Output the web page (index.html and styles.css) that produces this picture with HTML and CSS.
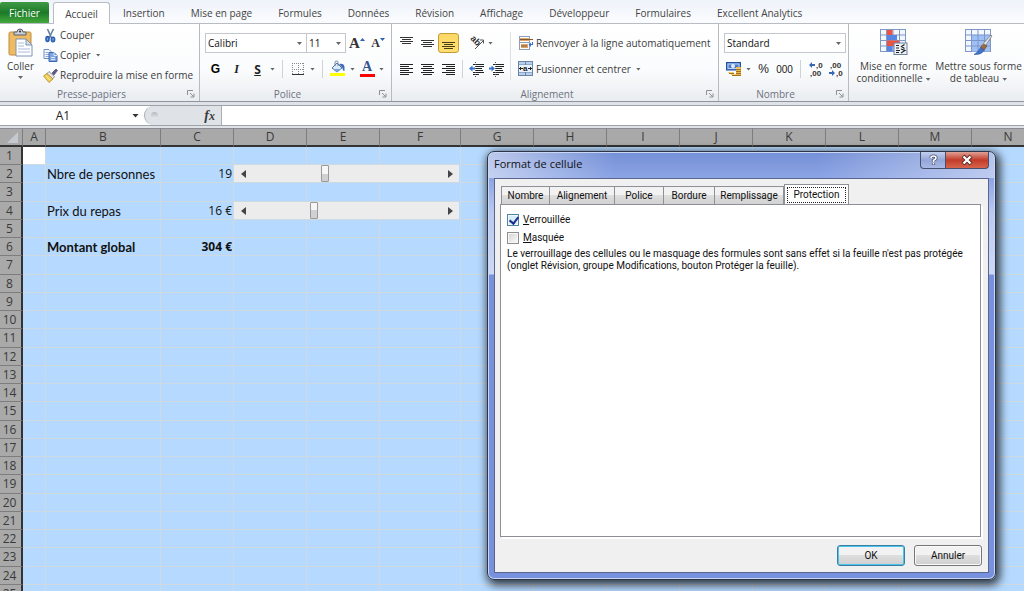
FILE: index.html
```html
<!DOCTYPE html>
<html lang="fr">
<head>
<meta charset="utf-8">
<title>Format de cellule</title>
<link rel="stylesheet" href="styles.css">
</head>
<body>
<div class="app">
  <nav class="tabs">
    <button class="tab file">Fichier</button>
    <button class="tab active">Accueil</button>
    <button class="tab">Insertion</button>
    <button class="tab">Mise en page</button>
    <button class="tab">Formules</button>
    <button class="tab">Données</button>
    <button class="tab">Révision</button>
    <button class="tab">Affichage</button>
    <button class="tab">Développeur</button>
    <button class="tab">Formulaires</button>
    <button class="tab">Excellent Analytics</button>
  </nav>

  <div class="ribbon">
    <section class="group clipboard">
      <div class="tools clip">
        <button class="paste">
          <svg width="26" height="28" viewBox="0 0 26 28"><rect x="1" y="3" width="22" height="23" rx="1.5" fill="#eebb62" stroke="#c08a3c"/><path d="M6 6h12V3h-3a3 3 0 0 0-6 0H6z" fill="#c9ced6" stroke="#59606c"/><circle cx="12" cy="2.500" r="1" fill="#333"/><path d="M8 10h10l6 6v11H8z" fill="#fff" stroke="#7d93b5"/><path d="M18 10v6h6z" fill="#d3deee" stroke="#7d93b5"/><path d="M10 14h6M10 17h6M10 20h12M10 23h12" stroke="#a9bbd6"/></svg>
          <span>Coller</span><i class="caret"></i>
        </button>
        <div class="cliplist">
          <button class="cmd"><svg width="15" height="15" viewBox="0 0 15 15"><path d="M4.500 1l4 9M10.500 1L6 10" stroke="#6a7f9e" stroke-width="1.600" fill="none"/><ellipse cx="4.500" cy="11" rx="1.500" ry="2.400" fill="#7ea3de" stroke="#2b5db5" stroke-width="1.600"/><ellipse cx="10" cy="11.500" rx="1.600" ry="2.200" fill="#7ea3de" stroke="#2b5db5" stroke-width="1.600"/></svg>Couper</button>
          <button class="cmd"><svg width="15" height="15" viewBox="0 0 15 15"><path d="M1 1.500h5l3 3v6H1z" fill="#f5f9ff" stroke="#6f8fc4"/><path d="M2.500 4.500h3M2.500 6.500h4M2.500 8.500h4" stroke="#8fabd8"/><path d="M6 4.500h5l3 3v6H6z" fill="#7fa5e0" stroke="#3f67ad"/><path d="M11 4.500v3h3M8 9.500h4M8 11.500h4" stroke="#dce8fa" fill="none"/></svg>Copier<i class="caret"></i></button>
          <button class="cmd"><svg width="15" height="15" viewBox="0 0 15 15"><path d="M9 5l4-4 1.500 1.500L11 7z" fill="#5f5a8c" stroke="#3f3a60" stroke-width=".6"/><path d="M6 3.500l5.500 5-2 2.500-6-5z" fill="#e6e8ee" stroke="#66686e" stroke-width=".7"/><path d="M4 5.500l6 5.500-4 3.500L.500 8z" fill="#f1cf55" stroke="#a98219" stroke-width=".7"/><path d="M3 8l4 4" stroke="#fff0a8"/></svg>Reproduire la mise en forme</button>
        </div>
      </div>
      <footer class="caption"><span>Presse-papiers</span><button class="launch" aria-label="Options"><svg width="8" height="8" viewBox="0 0 8 8"><path d="M.5 5V.5H6M3 3l3.500 3.500M7 3.500V7H3.500" fill="none" stroke="#8a8f98"/></svg></button></footer>
    </section>

    <section class="group font">
      <div class="tools rows">
        <div class="row">
          <span class="combo name"><select aria-label="Police"><option>Calibri</option></select><i class="caret"></i></span>
          <span class="combo size"><select aria-label="Taille"><option>11</option></select><i class="caret"></i></span>
          <button class="ic grow" aria-label="Agrandir"><b class="serif big">A</b><svg width="5" height="12" viewBox="0 0 5 12"><path d="M0 4l2.500-3L5 4z" fill="#2f5fb8"/></svg></button>
          <button class="ic grow" aria-label="Réduire"><b class="serif small">A</b><svg width="5" height="12" viewBox="0 0 5 12"><path d="M0 1h5L2.500 4z" fill="#2f5fb8"/></svg></button>
        </div>
        <div class="row">
          <button class="ic fmt"><b>G</b></button>
          <button class="ic fmt"><em>I</em></button>
          <button class="ic fmt"><u>S</u></button>
          <i class="caret pad"></i><i class="sep"></i>
          <button class="ic" aria-label="Bordures"><svg width="14" height="14" viewBox="0 0 14 14"><path d="M1 1.500h12M1 7.500h12M1.500 1v11M7.500 1v11M12.500 1v11" stroke="#888" stroke-dasharray="1 1"/><path d="M1 12.500h12" stroke="#333"/></svg></button>
          <i class="caret pad"></i><i class="sep"></i>
          <button class="ic" aria-label="Remplissage"><svg width="16" height="16" viewBox="0 0 16 16"><path d="M2 7l5-5 5 5-5 4z" fill="#dbe8f8" stroke="#56749f"/><path d="M5 5V1.500a1.500 1.500 0 0 1 3 0V5" fill="none" stroke="#6a82a6"/><path d="M9 3q5-1 5.500 3v4q-2 0-2-3z" fill="#3e6cb8"/><path d="M3 8h8l-4 3z" fill="#78a4de"/><rect x="0" y="12" width="15" height="3" fill="#ff0"/></svg></button>
          <i class="caret pad"></i>
          <button class="ic acolor" aria-label="Couleur de police"><b class="serif">A</b></button>
          <i class="caret pad"></i>
        </div>
      </div>
      <footer class="caption"><span>Police</span><button class="launch" aria-label="Options"><svg width="8" height="8" viewBox="0 0 8 8"><path d="M.5 5V.5H6M3 3l3.500 3.500M7 3.500V7H3.500" fill="none" stroke="#8a8f98"/></svg></button></footer>
    </section>

    <section class="group align">
      <div class="tools aligns">
        <div class="rows">
          <div class="row">
            <button class="ic fmt" aria-label="Haut"><svg width="14" height="14" viewBox="0 0 14 14"><path d="M0 1.500h13M2 3.500h9M0 5.500h13M2 7.500h9" stroke="#333"/></svg></button>
            <button class="ic fmt" aria-label="Centre"><svg width="14" height="14" viewBox="0 0 14 14"><path d="M0 4.500h13M2 6.500h9M0 8.500h13M2 10.500h9" stroke="#333"/></svg></button>
            <button class="ic fmt on" aria-label="Bas"><svg width="14" height="14" viewBox="0 0 14 14"><path d="M0 6.500h13M2 8.500h9M0 10.500h13M2 12.500h9" stroke="#4a3f14"/></svg></button>
            <i class="sep faint"></i>
            <button class="ic" aria-label="Orientation"><svg width="16" height="16" viewBox="0 0 16 16"><text x="0" y="8" class="ab" transform="rotate(45 5 6)">ab</text><path d="M5 14l8-8M10 5h3.500v3.500" fill="none" stroke="#555"/></svg></button>
            <i class="caret"></i>
          </div>
          <div class="row">
            <button class="ic fmt" aria-label="Gauche"><svg width="14" height="14" viewBox="0 0 14 14"><path d="M0 2.500h13M0 4.500h9M0 6.500h13M0 8.500h9M0 10.500h13M0 12.500h9" stroke="#222"/></svg></button>
            <button class="ic fmt" aria-label="Centrer"><svg width="14" height="14" viewBox="0 0 14 14"><path d="M0 2.500h13M2 4.500h9M0 6.500h13M2 8.500h9M0 10.500h13M2 12.500h9" stroke="#222"/></svg></button>
            <button class="ic fmt" aria-label="Droite"><svg width="14" height="14" viewBox="0 0 14 14"><path d="M0 2.500h13M4 4.500h9M0 6.500h13M4 8.500h9M0 10.500h13M4 12.500h9" stroke="#222"/></svg></button>
            <i class="sep narrow"></i>
            <button class="ic" aria-label="Diminuer le retrait"><svg width="15" height="15" viewBox="0 0 15 15"><path d="M4 2.500h11M7 4.500h8M7 6.500h6M7 8.500h7M4 10.500h11M4 12.500h6" stroke="#222"/><path d="M6.500 0v15" stroke="#555" stroke-dasharray="1 1"/><path d="M0 6.500l3.500-3v2H6v2H3.500v2z" fill="#3a72d0"/></svg></button>
            <button class="ic" aria-label="Augmenter le retrait"><svg width="15" height="15" viewBox="0 0 15 15"><path d="M4 2.500h11M7 4.500h8M7 6.500h6M7 8.500h7M4 10.500h11M4 12.500h6" stroke="#222"/><path d="M6.500 0v15" stroke="#555" stroke-dasharray="1 1"/><path d="M6 6.500l-3.500-3v2H0v2h2.500v2z" fill="#3a72d0"/></svg></button>
          </div>
        </div>
        <i class="sep tall"></i>
        <div class="rows">
          <button class="cmd row"><svg width="16" height="16" viewBox="0 0 16 16"><path d="M1.500 1v14M11.500 1v14M1 1.500h11M1 7.500h11M1 14.500h11" stroke="#8a9fc0" fill="none"/><rect x="2" y="3" width="10" height="3" fill="#e0a465"/><rect x="3" y="9" width="7" height="4" fill="#e0a465"/><path d="M2 4.500h13M3 11h6" stroke="#7b5a38"/><path d="M14 7h1v3h-2v2l-2.500-2.500L13 7.500V9h1z" fill="#3a72c8"/></svg>Renvoyer à la ligne automatiquement</button>
          <button class="cmd row"><svg width="16" height="16" viewBox="0 0 16 16"><rect x=".5" y=".5" width="14" height="14" fill="#b8cfee" stroke="#6b83a8"/><path d="M7.500 0v15M0 4h15M0 11h15" stroke="#6b83a8"/><rect x="1" y="4" width="13" height="7" fill="#e9f1fc"/><path d="M1 7.500h4M10 7.500h4M3 6l-1.500 1.500L3 9M12 6l1.500 1.500L12 9" stroke="#222" fill="none"/><text x="5" y="10" class="mid">a</text></svg>Fusionner et centrer<i class="caret"></i></button>
        </div>
      </div>
      <footer class="caption"><span>Alignement</span><button class="launch" aria-label="Options"><svg width="8" height="8" viewBox="0 0 8 8"><path d="M.5 5V.5H6M3 3l3.500 3.500M7 3.500V7H3.500" fill="none" stroke="#8a8f98"/></svg></button></footer>
    </section>

    <section class="group number">
      <div class="tools rows">
        <div class="row">
          <span class="combo wide"><select aria-label="Format de nombre"><option>Standard</option></select><i class="caret"></i></span>
        </div>
        <div class="row">
          <button class="ic" aria-label="Format monétaire"><svg width="16" height="16" viewBox="0 0 16 16"><rect x=".5" y="1.500" width="14" height="7.500" fill="#4b7bc9" stroke="#244f9b"/><rect x="2" y="3" width="11" height="4.500" fill="none" stroke="#bcd3f5"/><circle cx="7" cy="5" r="2" fill="#e2ecfb"/><path d="M10 6h5v9h-5z" fill="#e9b548"/><path d="M10 8.500h5M10 10.500h5M10 12.500h5M10 14.500h5M3 12.500h5M6 14.500h4" stroke="#a2711c"/><path d="M2 11.500h6M5 13.500h5M10 7.500h4" stroke="#f3cf70"/></svg></button>
          <i class="caret pad"></i>
          <button class="ic fmt txt">%</button>
          <button class="ic fmt txt">000</button>
          <i class="sep"></i>
          <button class="ic" aria-label="Ajouter une décimale"><svg width="16" height="16" viewBox="0 0 16 16"><text x="8" y="7" class="dec">,0</text><text x="2" y="15" class="dec">,00</text><path d="M1 4l3-3v2h3v2H4v2z" fill="#3a66b8"/></svg></button>
          <button class="ic" aria-label="Réduire les décimales"><svg width="16" height="16" viewBox="0 0 16 16"><text x="2" y="7" class="dec">,00</text><text x="8" y="15" class="dec">,0</text><path d="M7 12L4 9v2H1v2h3v2z" fill="#3a66b8"/></svg></button>
        </div>
      </div>
      <footer class="caption"><span>Nombre</span><button class="launch" aria-label="Options"><svg width="8" height="8" viewBox="0 0 8 8"><path d="M.5 5V.5H6M3 3l3.500 3.500M7 3.500V7H3.500" fill="none" stroke="#8a8f98"/></svg></button></footer>
    </section>

    <section class="group style">
      <div class="tools bigs">
        <button class="large">
          <svg width="28" height="27" viewBox="0 0 28 27"><rect x=".5" y=".5" width="25" height="22" fill="#f2f6fd" stroke="#8298c4"/><path d="M6.500 0v23M13 0v23M19.500 0v23M0 6h26M0 11.500h26M0 17h26" stroke="#8298c4"/><rect x="7" y="1" width="5.500" height="5" fill="#ef5340"/><rect x="7" y="6" width="10" height="5" fill="#5586e4"/><rect x="7" y="11.500" width="12" height="5.500" fill="#ef5340"/><rect x="7" y="17" width="5.500" height="5.500" fill="#5586e4"/><rect x="14" y="14" width="13" height="11.500" fill="#eef3fa" stroke="#6d7f9f"/><path d="M16 16.500h3M16 19h3M16 21.500h4M16 23.500h3M24.500 15.500l-3 2 3 2M21 20l4 1.500-4 2.500" stroke="#222" stroke-width="1.200" fill="none"/></svg>
          <span>Mise en forme<br>conditionnelle<i class="caret"></i></span>
        </button>
        <button class="large">
          <svg width="28" height="27" viewBox="0 0 28 27"><rect x=".5" y=".5" width="25" height="22" fill="#f2f6fd" stroke="#8298c4"/><rect x="7" y="6" width="18" height="16.500" fill="#9fc0f5"/><path d="M6.500 0v23M13 0v23M19.500 0v23M0 6h26M0 11.500h26M0 17h26" stroke="#7b95cc"/><path d="M27 7l-8 12-3-2L26 6z" fill="#e4e6ea" stroke="#777" stroke-width=".8"/><path d="M19 15l3 2-3 4-3.500-2.500z" fill="#9a6b3c" stroke="#6b4724" stroke-width=".6"/><path d="M15.500 18.500l3.500 2.500q-2 5-10 4.500 4-2 6.500-7z" fill="#3f72c8" stroke="#2a55a0" stroke-width=".6"/></svg>
          <span>Mettre sous forme<br>de tableau<i class="caret"></i></span>
        </button>
      </div>
    </section>
  </div>

  <div class="formula">
    <input class="namebox" value="A1" aria-label="Zone Nom">
    <i class="caret dark"></i>
    <div class="fxbar"><i class="knob"></i><button class="fx">f<span>x</span></button></div>
    <input class="finput" aria-label="Barre de formule">
  </div>

  <main class="sheet">
    <table>
      <colgroup><col class="c-a"><col class="c-a"><col class="c-b"><col class="c-n"><col class="c-n"><col class="c-n"><col class="c-f"><col class="c-n"><col class="c-n"><col class="c-n"><col class="c-n"><col class="c-n"><col class="c-n"><col class="c-n"><col class="c-n"></colgroup>
      <thead><tr><th class="corner"><svg width="20" height="16" viewBox="0 0 20 16"><path d="M18 3v11H7z" fill="#c3c9cf"/></svg></th><th>A</th><th>B</th><th>C</th><th>D</th><th>E</th><th>F</th><th>G</th><th>H</th><th>I</th><th>J</th><th>K</th><th>L</th><th>M</th><th>N</th></tr></thead>
      <tbody id="cells"></tbody>
    </table>
  </main>

  <div class="dialog" role="dialog" aria-label="Format de cellule">
    <header class="title"><span>Format de cellule</span>
      <div class="winbtns"><button class="help" aria-label="Aide"><svg width="11" height="12" viewBox="0 0 11 12"><path d="M3 4q0-2 2.500-2T8 4q0 1.200-2.500 2.500V8M5.500 9v2" fill="none" stroke="#4b5570" stroke-width="3.200"/><path d="M3 4q0-2 2.500-2T8 4q0 1.200-2.500 2.500V8M5.500 9v1.600" fill="none" stroke="#fff" stroke-width="1.600"/></svg></button><button class="close" aria-label="Fermer"><svg width="12" height="10" viewBox="0 0 12 10"><path d="M2 1l8 8M10 1L2 9" stroke="#5a2a2a" stroke-width="4"/><path d="M2.500 1.500l7 7M9.500 1.500l-7 7" stroke="#fff" stroke-width="2.300"/></svg></button></div>
    </header>
    <div class="client">
      <div class="dtabs" role="tablist">
        <button class="w48">Nombre</button><button class="w66">Alignement</button><button class="w48">Police</button><button class="w51">Bordure</button><button class="w69">Remplissage</button><button class="sel"><span>Protection</span></button>
      </div>
      <div class="panel">
        <label class="check"><input type="checkbox" checked><span><u>V</u>errouillée</span></label>
        <label class="check"><input type="checkbox"><span><u>M</u>asquée</span></label>
        <p>Le verrouillage des cellules ou le masquage des formules sont sans effet si la feuille n'est pas protégée<br>(onglet Révision, groupe Modifications, bouton Protéger la feuille).</p>
      </div>
      <div class="actions"><button class="ok">OK</button><button>Annuler</button></div>
    </div>
  </div>
</div>
<script src="sheet.js"></script>
</body>
</html>
```

FILE: sheet.js
```js
const rows = {
  2: { label: 'Nbre de personnes', text: '19', value: 19 },
  4: { label: 'Prix du repas', text: '16 €', value: 16 },
  6: { label: 'Montant global', text: '304 €', bold: true }
};

const scroller = (row) => `<td colspan="3" class="scroll"><div class="sbar">
  <button aria-label="Moins"><svg width="5" height="8" viewBox="0 0 5 8"><path d="M5 0v8L0 4z" fill="#444"/></svg></button>
  <input type="range" min="0" max="50" value="${row.value}" aria-label="${row.label}">
  <button aria-label="Plus"><svg width="5" height="8" viewBox="0 0 5 8"><path d="M0 0v8l5-4z" fill="#444"/></svg></button>
</div></td>`;

let html = '';
for (let r = 1; r <= 25; r++) {
  const row = rows[r] || {};
  const slider = row.value !== undefined;
  html += `<tr${row.bold ? ' class="bold"' : ''}><th>${r}</th>`;
  html += `<td${r === 1 ? ' class="current"' : ''}></td>`;
  html += `<td class="label">${row.label || ''}</td><td class="num">${row.text || ''}</td>`;
  html += slider ? scroller(row) : '<td></td><td></td><td></td>';
  html += '<td></td>'.repeat(8) + '</tr>';
}
document.getElementById('cells').innerHTML = html;
```

FILE: styles.css
```css
* { box-sizing: border-box; }
body { margin: 0; font-family: "Open Sans", "Noto Sans", sans-serif; font-size: 10px; color: #3c3c3c; }
button, input, select { font: inherit; color: inherit; margin: 0; padding: 0; border: 0; background: none; }
button { white-space: nowrap; }
svg { display: block; flex: none; overflow: visible; }
.app { position: relative; height: 100vh; overflow: hidden; display: flex; flex-direction: column; background: #dfe3e8; }

.tabs { display: flex; align-items: flex-end; height: 24px; flex: none; background: linear-gradient(#eef3fa, #fbfcfe); border-bottom: 1px solid #b9bdc3; }
.tab { height: 21px; padding: 0 13px; line-height: 20px; color: #444; }
.tab.file { width: 49px; padding: 0; margin-right: 4px; color: #fff; background: linear-gradient(#3f9a45, #1c7a28 50%, #43a83d); border-radius: 2px 2px 0 0; }
.tab.active { width: 57px; padding: 0; background: #fff; border: 1px solid #b9bdc3; border-bottom: 0; border-radius: 3px 3px 0 0; height: 22px; margin-bottom: -1px; }

.ribbon { display: flex; height: 78px; flex: none; background: linear-gradient(#fff, #fbfcfd 60%, #e9ecf0); border-bottom: 1px solid #8f959e; }
.group { display: flex; flex-direction: column; flex: none; border-right: 1px solid #b6bac1; }
.clipboard { width: 200px; }
.font { width: 192px; }
.align { width: 327px; }
.number { width: 130px; }
.style { flex: 1; border-right: 0; }
.tools { flex: 1; padding: 6px 0 0 5px; }
.caption { display: flex; align-items: center; height: 15px; color: #6d7282; }
.caption span { flex: 1; text-align: center; }
.launch { width: 16px; display: flex; justify-content: center; }
.rows { display: flex; flex-direction: column; }
.row { display: flex; align-items: center; height: 26px; }
.clip { display: flex; padding: 1px 0 0; }
.paste { width: 41px; display: flex; flex-direction: column; align-items: center; padding-top: 4px; }
.paste span { line-height: 18px; }
.paste .caret { margin-top: 1px; }
.cliplist { display: flex; flex-direction: column; padding-left: 2px; }
.cliplist .cmd { height: 20px; }
.cmd { display: flex; align-items: center; gap: 2px; }
.caret { display: inline-block; flex: none; width: 5px; height: 3px; background: #666; clip-path: polygon(0 0, 100% 0, 50% 100%); }
.cmd .caret, .large .caret { margin-left: 3px; }
.caret.pad { margin: 0 2px; }
.sep { flex: none; width: 1px; height: 18px; margin: 0 5px; background: #cfd2d6; }
.sep.faint { background: transparent; margin: 0 4px; }
.sep.narrow { margin: 0 3px; }
.sep.tall { height: 48px; margin: 2px 7px 0 4px; background: #dcdfe3; }
.combo { position: relative; height: 20px; border: 1px solid #c4c8ce; background: #fff; }
.combo select { width: 100%; height: 100%; appearance: none; padding-left: 2px; color: #111; }
.combo .caret { position: absolute; right: 4px; top: 8px; }
.combo.name { width: 102px; }
.combo.size { width: 40px; margin-left: -1px; }
.combo.wide { width: 122px; }
.ic { display: flex; align-items: center; justify-content: center; width: 20px; height: 20px; flex: none; }
.fmt { width: 21px; color: #222; font-size: 12px; }
.fmt b { font-family: "Liberation Sans", sans-serif; font-weight: 700; color: #000; }
.fmt em { font-family: "Liberation Serif", serif; font-weight: 700; }
.fmt u { font-weight: 700; }
.fmt.txt { font-family: "Liberation Sans", sans-serif; font-size: 10px; }
.fmt.txt:nth-child(3) { font-size: 12px; }
.grow { width: 20px; margin-left: 1px; }
.serif { font-family: "Liberation Serif", serif; font-size: 14px; line-height: 12px; color: #333; }
.serif.big { font-size: 15px; }
.serif.small { font-size: 12px; }
.acolor { align-items: flex-start; }
.acolor .serif { width: 15px; height: 18px; line-height: 16px; border-bottom: 3px solid #f00; color: #35548f; text-align: center; }
.on { border: 1px solid #c79a35; border-radius: 3px; background: linear-gradient(#fbd766, #ffdf70); }
.ab { font: 700 9px "Liberation Sans", sans-serif; fill: #333; }
.mid { font: 700 8px "Liberation Sans", sans-serif; fill: #222; }
.dec { font: 700 8px "Liberation Sans", sans-serif; fill: #333; }
.aligns { display: flex; padding-left: 4px; }
.bigs { display: flex; padding: 5px 0 0 2px; }
.large { display: flex; flex-direction: column; align-items: center; gap: 4px; width: 85px; line-height: 12px; }
.large .caret { vertical-align: middle; }

.formula { display: flex; align-items: center; height: 21px; margin: 3px 0 2px; flex: none; background: #fff; border-top: 1px solid #9da3ab; border-bottom: 1px solid #9da3ab; }
.namebox { width: 126px; text-align: center; font-size: 12px; color: #222; }
.caret.dark { width: 7px; height: 4px; margin: 0 5px 0 6px; background: #333; }
.fxbar { display: flex; align-items: center; justify-content: space-between; width: 78px; height: 100%; padding: 0 6px; background: #dfe3e8; border: 1px solid #a9aeb5; border-width: 0 1px; border-radius: 10px 0 0 10px; }
.knob { width: 7px; height: 7px; border-radius: 50%; background: linear-gradient(#b5b9bf, #e9ecef); }
.fx { font: italic 700 14px "Liberation Serif", serif; line-height: 14px; }
.fx span { font-size: 12px; }
.finput { flex: 1; height: 100%; background: #fff; }

.sheet { flex: 1; min-height: 0; overflow: hidden; background: #b6daff; }
table { table-layout: fixed; width: 0; border-collapse: separate; border-spacing: 0; font-size: 12px; color: #111; }
.c-a { width: 23px; } .c-b { width: 115px; } .c-n { width: 73px; } .c-f { width: 81px; }
tr { height: 18px; }
tbody tr:nth-child(4n+3) { height: 19px; }
td, th { padding: 0; line-height: 14px; white-space: nowrap; }
th { background: #a9a9a9; border-right: 1px solid #7d7d7d; font-weight: 400; color: #3a3a3a; }
thead tr { height: 19px; }
thead th { border-top: 1px solid #8a8e94; border-bottom: 2px solid #333; }
tbody th { border-bottom: 1px solid #7d7d7d; border-right: 2px solid #333; padding-right: 2px; }
td { border-right: 1px solid #cfd9e2; border-bottom: 1px solid #cfd9e2; background: #b6daff; }
.current { background: #fff; }
.label { padding-left: 1px; font-family: Lato, sans-serif; font-size: 13px; }
.num { text-align: right; padding-right: 1px; }
.bold { font-weight: 700; }
.scroll { vertical-align: top; padding-right: 1px; }
.sbar { display: flex; height: 17px; background: #ececec; }
.sbar button { width: 18px; display: flex; align-items: center; justify-content: center; }
.sbar input { appearance: none; flex: 1; min-width: 0; height: 17px; }
.sbar input::-webkit-slider-thumb { appearance: none; width: 8px; height: 17px; border: 1px solid #999; border-radius: 1px; background: linear-gradient(#f6f6f6 50%, #d0d0d4 50%); }

.dialog { position: absolute; left: 487px; top: 151px; width: 509px; height: 429px; display: flex; flex-direction: column; padding: 0 6px 6px; border: 1px solid #2d3648; border-radius: 7px; background: linear-gradient(90deg, rgba(255,255,255,.5), rgba(255,255,255,0) 25%, rgba(255,255,255,0) 65%, rgba(255,255,255,.45)) top / 100% 26px no-repeat, linear-gradient(#7590d6, #8ba4e4 26px, #b9c9f0 60px, #cdd9f5 122px, #7891de 123px); box-shadow: inset 0 0 0 1px #c9d6f4, 2px 3px 10px 2px rgba(0,0,0,.75); font-family: Roboto, sans-serif; color: #111; }
.title { display: flex; justify-content: space-between; height: 26px; flex: none; }
.title > span { font-family: "Open Sans", sans-serif; font-size: 11px; line-height: 24px; }
.winbtns { display: flex; height: 17px; }
.winbtns button { display: flex; align-items: center; justify-content: center; border: 1px solid #46506e; border-top: 0; }
.help { width: 26px; border-radius: 0 0 0 4px; background: linear-gradient(#c5d0ee, #93a5d8 50%, #a9b9e6); }
.close { width: 44px; margin-left: -1px; border-radius: 0 0 4px 0; background: linear-gradient(#e0a196, #c23c28 50%, #d8644c); }
.client { flex: 1; display: flex; flex-direction: column; padding: 5px 7px 6px 5px; border: 1px solid #59658c; background: #f0f0f0; }
.dtabs { display: flex; align-items: flex-end; padding-left: 1px; height: 20px; }
.dtabs button { height: 18px; flex: none; border: 1px solid #8d9096; border-width: 1px 1px 0 0; background: linear-gradient(#f2f2f2 50%, #dedede 50%, #d2d2d2); }
.dtabs button:first-child { border-left-width: 1px; }
.w48 { width: 49px; } .w51 { width: 51px; } .w66 { width: 65px; } .w69 { width: 69px; }
.dtabs .sel { width: 65px; height: 21px; padding: 2px; margin-bottom: -1px; border-left-width: 1px; background: #fff; }
.sel span { display: block; line-height: 14px; border: 1px dotted #222; }
.panel { flex: 1; padding: 6px; border: 1px solid #8d9096; background: #fff; box-shadow: 2px 2px 0 #fff; }
.check { display: flex; align-items: center; gap: 4px; height: 18px; line-height: 14px; }
.check input { appearance: none; width: 12px; height: 12px; border: 1px solid #8e8f8f; background: linear-gradient(135deg, #d5d5d5, #fafafa); box-shadow: inset 0 0 0 1px #f6f6f6; }
.check input:checked { border-color: #4a86ad; background: #d6ecf8; }
.check input:checked::before { content: ""; display: block; width: 4px; height: 7px; margin: 0 3px; border: solid #1a2f8c; border-width: 0 2px 2px 0; transform: rotate(38deg); }
.panel p { margin: 1px 0 0; line-height: 12px; white-space: nowrap; }
.actions { display: flex; justify-content: flex-end; gap: 9px; padding-top: 8px; margin-right: -1px; }
.actions button { width: 68px; height: 21px; border: 1px solid #777; border-radius: 3px; background: linear-gradient(#f2f2f2 50%, #dedede 50%, #cfcfcf); box-shadow: inset 0 0 0 1px #fafafa; }
.actions .ok { border-color: #3a7f9f; box-shadow: inset 0 0 0 1px #48c4ee; }
```
